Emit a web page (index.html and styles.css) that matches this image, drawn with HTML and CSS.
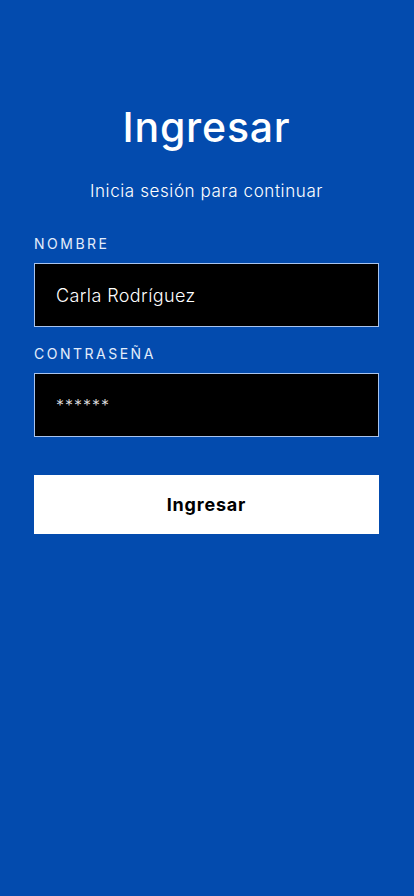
FILE: index.html
```html
<!DOCTYPE html>
<html lang="es">
  <head>
    <meta charset="UTF-8" />
    <meta name="viewport" content="width=device-width, initial-scale=1.0" />
    <title>Ingresar</title>
    <link rel="stylesheet" href="styles.css">
  </head>

  <body>
    <main class="login">
      <h1>Ingresar</h1>
      <p class="subtitle">Inicia sesión para continuar</p>

      <form class="login-form">
        <label class="field-label" for="nombre">Nombre</label>
        <input class="field-input" id="nombre" type="text" value="Carla Rodríguez" />

        <label class="field-label" for="clave">Contraseña</label>
        <input class="field-input" id="clave" type="text" value="******" />

        <button type="button" class="submit-button">Ingresar</button>
      </form>
    </main>
  </body>
</html>
```

FILE: styles.css
```css
html,
body {
  height: 100%;
}

body {
  margin: 0;
  background-color: #034bae;
  font-family: Inter, "Open Sans", sans-serif;
  color: #fff;
}

.login {
  padding: 103px 35px 0 34px;
}

h1 {
  margin: 0;
  text-align: center;
  font-size: 41px;
  font-weight: 500;
  line-height: 48px;
  letter-spacing: 0.8px;
}

.subtitle {
  margin: 29px 0 0;
  text-align: center;
  font-size: 17px;
  font-weight: 300;
  line-height: 22px;
  letter-spacing: 0.6px;
}

.login-form {
  display: flex;
  flex-direction: column;
  margin-top: 33px;
}

.field-label {
  font-size: 14px;
  font-weight: 400;
  line-height: 18px;
  letter-spacing: 2.5px;
  text-transform: uppercase;
  color: #e3edfb;
  margin-bottom: 10px;
}

.field-input {
  box-sizing: border-box;
  height: 64px;
  margin: 0 0 18px;
  padding: 0 21px;
  border: 1px solid #a8c4ee;
  background: #000;
  color: #fff;
  font-family: inherit;
  font-size: 18px;
  font-weight: 300;
  letter-spacing: 0.4px;
  outline: none;
}

#clave {
  font-size: 16px;
  letter-spacing: 1px;
  color: #e6e6e6;
}

.submit-button {
  height: 59px;
  margin-top: 20px;
  border: none;
  background: #fff;
  color: #000;
  font-family: inherit;
  font-size: 18px;
  font-weight: 700;
  letter-spacing: 0.8px;
  cursor: pointer;
}
```
